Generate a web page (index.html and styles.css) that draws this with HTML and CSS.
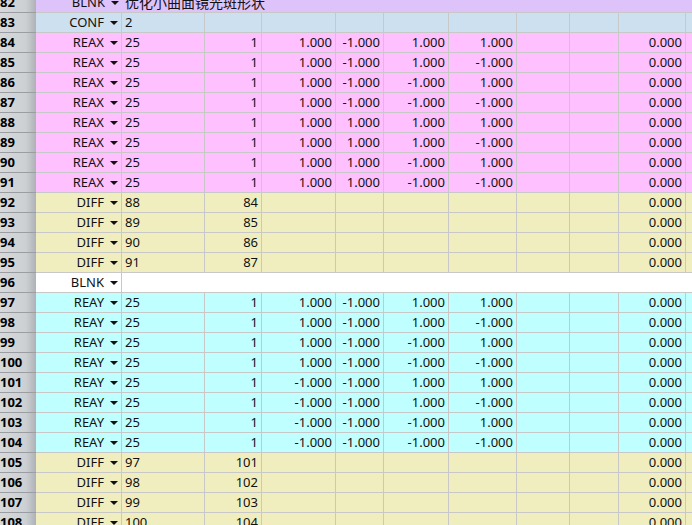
FILE: index.html
```html
<!DOCTYPE html>
<html lang="zh">
<head>
<meta charset="utf-8">
<title>Sheet</title>
<link rel="stylesheet" href="styles.css">
</head>
<body>
<div class="sheet">
  <div class="row blnk-top">
    <div class="hdr">82</div><div class="c type">BLNK<i class="dd"></i></div><div class="c span cjk">优化小曲面镜光斑形状</div>
  </div>
  <div class="row conf">
    <div class="hdr">83</div><div class="c type">CONF<i class="dd"></i></div><div class="c l">2</div><div class="c"></div><div class="c"></div><div class="c"></div><div class="c"></div><div class="c"></div><div class="c"></div><div class="c"></div><div class="c"></div><div class="c end"></div>
  </div>

  <div class="row reax"><div class="hdr">84</div><div class="c type">REAX<i class="dd"></i></div><div class="c l">25</div><div class="c">1</div><div class="c">1.000</div><div class="c">-1.000</div><div class="c">1.000</div><div class="c">1.000</div><div class="c"></div><div class="c"></div><div class="c">0.000</div><div class="c end"></div></div>
  <div class="row reax"><div class="hdr">85</div><div class="c type">REAX<i class="dd"></i></div><div class="c l">25</div><div class="c">1</div><div class="c">1.000</div><div class="c">-1.000</div><div class="c">1.000</div><div class="c">-1.000</div><div class="c"></div><div class="c"></div><div class="c">0.000</div><div class="c end"></div></div>
  <div class="row reax"><div class="hdr">86</div><div class="c type">REAX<i class="dd"></i></div><div class="c l">25</div><div class="c">1</div><div class="c">1.000</div><div class="c">-1.000</div><div class="c">-1.000</div><div class="c">1.000</div><div class="c"></div><div class="c"></div><div class="c">0.000</div><div class="c end"></div></div>
  <div class="row reax"><div class="hdr">87</div><div class="c type">REAX<i class="dd"></i></div><div class="c l">25</div><div class="c">1</div><div class="c">1.000</div><div class="c">-1.000</div><div class="c">-1.000</div><div class="c">-1.000</div><div class="c"></div><div class="c"></div><div class="c">0.000</div><div class="c end"></div></div>
  <div class="row reax"><div class="hdr">88</div><div class="c type">REAX<i class="dd"></i></div><div class="c l">25</div><div class="c">1</div><div class="c">1.000</div><div class="c">1.000</div><div class="c">1.000</div><div class="c">1.000</div><div class="c"></div><div class="c"></div><div class="c">0.000</div><div class="c end"></div></div>
  <div class="row reax"><div class="hdr">89</div><div class="c type">REAX<i class="dd"></i></div><div class="c l">25</div><div class="c">1</div><div class="c">1.000</div><div class="c">1.000</div><div class="c">1.000</div><div class="c">-1.000</div><div class="c"></div><div class="c"></div><div class="c">0.000</div><div class="c end"></div></div>
  <div class="row reax"><div class="hdr">90</div><div class="c type">REAX<i class="dd"></i></div><div class="c l">25</div><div class="c">1</div><div class="c">1.000</div><div class="c">1.000</div><div class="c">-1.000</div><div class="c">1.000</div><div class="c"></div><div class="c"></div><div class="c">0.000</div><div class="c end"></div></div>
  <div class="row reax"><div class="hdr">91</div><div class="c type">REAX<i class="dd"></i></div><div class="c l">25</div><div class="c">1</div><div class="c">1.000</div><div class="c">1.000</div><div class="c">-1.000</div><div class="c">-1.000</div><div class="c"></div><div class="c"></div><div class="c">0.000</div><div class="c end"></div></div>

  <div class="row diff"><div class="hdr">92</div><div class="c type">DIFF<i class="dd"></i></div><div class="c l">88</div><div class="c">84</div><div class="c"></div><div class="c"></div><div class="c"></div><div class="c"></div><div class="c"></div><div class="c"></div><div class="c">0.000</div><div class="c end"></div></div>
  <div class="row diff"><div class="hdr">93</div><div class="c type">DIFF<i class="dd"></i></div><div class="c l">89</div><div class="c">85</div><div class="c"></div><div class="c"></div><div class="c"></div><div class="c"></div><div class="c"></div><div class="c"></div><div class="c">0.000</div><div class="c end"></div></div>
  <div class="row diff"><div class="hdr">94</div><div class="c type">DIFF<i class="dd"></i></div><div class="c l">90</div><div class="c">86</div><div class="c"></div><div class="c"></div><div class="c"></div><div class="c"></div><div class="c"></div><div class="c"></div><div class="c">0.000</div><div class="c end"></div></div>
  <div class="row diff"><div class="hdr">95</div><div class="c type">DIFF<i class="dd"></i></div><div class="c l">91</div><div class="c">87</div><div class="c"></div><div class="c"></div><div class="c"></div><div class="c"></div><div class="c"></div><div class="c"></div><div class="c">0.000</div><div class="c end"></div></div>

  <div class="row blank"><div class="hdr">96</div><div class="c type">BLNK<i class="dd"></i></div><div class="c span"></div></div>

  <div class="row reay"><div class="hdr">97</div><div class="c type">REAY<i class="dd"></i></div><div class="c l">25</div><div class="c">1</div><div class="c">1.000</div><div class="c">-1.000</div><div class="c">1.000</div><div class="c">1.000</div><div class="c"></div><div class="c"></div><div class="c">0.000</div><div class="c end"></div></div>
  <div class="row reay"><div class="hdr">98</div><div class="c type">REAY<i class="dd"></i></div><div class="c l">25</div><div class="c">1</div><div class="c">1.000</div><div class="c">-1.000</div><div class="c">1.000</div><div class="c">-1.000</div><div class="c"></div><div class="c"></div><div class="c">0.000</div><div class="c end"></div></div>
  <div class="row reay"><div class="hdr">99</div><div class="c type">REAY<i class="dd"></i></div><div class="c l">25</div><div class="c">1</div><div class="c">1.000</div><div class="c">-1.000</div><div class="c">-1.000</div><div class="c">1.000</div><div class="c"></div><div class="c"></div><div class="c">0.000</div><div class="c end"></div></div>
  <div class="row reay"><div class="hdr">100</div><div class="c type">REAY<i class="dd"></i></div><div class="c l">25</div><div class="c">1</div><div class="c">1.000</div><div class="c">-1.000</div><div class="c">-1.000</div><div class="c">-1.000</div><div class="c"></div><div class="c"></div><div class="c">0.000</div><div class="c end"></div></div>
  <div class="row reay"><div class="hdr">101</div><div class="c type">REAY<i class="dd"></i></div><div class="c l">25</div><div class="c">1</div><div class="c">-1.000</div><div class="c">-1.000</div><div class="c">1.000</div><div class="c">1.000</div><div class="c"></div><div class="c"></div><div class="c">0.000</div><div class="c end"></div></div>
  <div class="row reay"><div class="hdr">102</div><div class="c type">REAY<i class="dd"></i></div><div class="c l">25</div><div class="c">1</div><div class="c">-1.000</div><div class="c">-1.000</div><div class="c">1.000</div><div class="c">-1.000</div><div class="c"></div><div class="c"></div><div class="c">0.000</div><div class="c end"></div></div>
  <div class="row reay"><div class="hdr">103</div><div class="c type">REAY<i class="dd"></i></div><div class="c l">25</div><div class="c">1</div><div class="c">-1.000</div><div class="c">-1.000</div><div class="c">-1.000</div><div class="c">1.000</div><div class="c"></div><div class="c"></div><div class="c">0.000</div><div class="c end"></div></div>
  <div class="row reay"><div class="hdr">104</div><div class="c type">REAY<i class="dd"></i></div><div class="c l">25</div><div class="c">1</div><div class="c">-1.000</div><div class="c">-1.000</div><div class="c">-1.000</div><div class="c">-1.000</div><div class="c"></div><div class="c"></div><div class="c">0.000</div><div class="c end"></div></div>

  <div class="row diff"><div class="hdr">105</div><div class="c type">DIFF<i class="dd"></i></div><div class="c l">97</div><div class="c">101</div><div class="c"></div><div class="c"></div><div class="c"></div><div class="c"></div><div class="c"></div><div class="c"></div><div class="c">0.000</div><div class="c end"></div></div>
  <div class="row diff"><div class="hdr">106</div><div class="c type">DIFF<i class="dd"></i></div><div class="c l">98</div><div class="c">102</div><div class="c"></div><div class="c"></div><div class="c"></div><div class="c"></div><div class="c"></div><div class="c"></div><div class="c">0.000</div><div class="c end"></div></div>
  <div class="row diff"><div class="hdr">107</div><div class="c type">DIFF<i class="dd"></i></div><div class="c l">99</div><div class="c">103</div><div class="c"></div><div class="c"></div><div class="c"></div><div class="c"></div><div class="c"></div><div class="c"></div><div class="c">0.000</div><div class="c end"></div></div>
  <div class="row diff"><div class="hdr">108</div><div class="c type">DIFF<i class="dd"></i></div><div class="c l">100</div><div class="c">104</div><div class="c"></div><div class="c"></div><div class="c"></div><div class="c"></div><div class="c"></div><div class="c"></div><div class="c">0.000</div><div class="c end"></div></div>
</div>
</body>
</html>
```
FILE: styles.css
```css
html, body {
  margin: 0;
  padding: 0;
  background: #ffffff;
  overflow: hidden;
}

.sheet {
  margin-top: -7px;
  font-family: "Noto Sans", "Open Sans", "Noto Sans CJK SC", sans-serif;
  font-size: 13px;
  color: #111;
}

.row {
  display: grid;
  grid-template-columns: 36px 86px 83px 57px 74px 48px 65px 68px 53px 49px 67px 1fr;
  height: 20px;
}

.hdr {
  box-sizing: border-box;
  height: 20px;
  line-height: 19px;
  padding-left: 0;
  font-weight: bold;
  color: #000;
  background: linear-gradient(to right, #d7d9db 0%, #cdd0d3 72%, #aeb2b6 100%);
  border-bottom: 1px solid #9a9da1;
  overflow: hidden;
  white-space: nowrap;
}

.c {
  box-sizing: border-box;
  height: 20px;
  line-height: 19px;
  border-right: 1px solid #c8c8c8;
  border-bottom: 1px solid #c8c8c8;
  text-align: right;
  padding: 0 3px;
  white-space: nowrap;
  overflow: hidden;
}

.c.l {
  text-align: left;
}

.c.end {
  border-right: none;
}

.c.span {
  grid-column: 3 / -1;
  border-right: none;
  text-align: left;
}

.type {
  display: flex;
  justify-content: flex-end;
  align-items: center;
}

.dd {
  display: inline-block;
  width: 0;
  height: 0;
  margin-left: 6px;
  border-left: 4px solid transparent;
  border-right: 4px solid transparent;
  border-top: 4px solid #111;
}

.cjk {
  font-family: "Noto Sans CJK SC", sans-serif;
  font-size: 14px;
}

.blnk-top .c { background: #dec3fa; }
.blnk-top .c.type { border-right: none; }
.conf .c { background: #cde0f0; }
.reax .c { background: #ffc0ff; }
.diff .c { background: #f0eebf; }
.blank .c { background: #ffffff; }
.blank .c.span { border-right: none; }
.reay .c { background: #c0ffff; }
```
